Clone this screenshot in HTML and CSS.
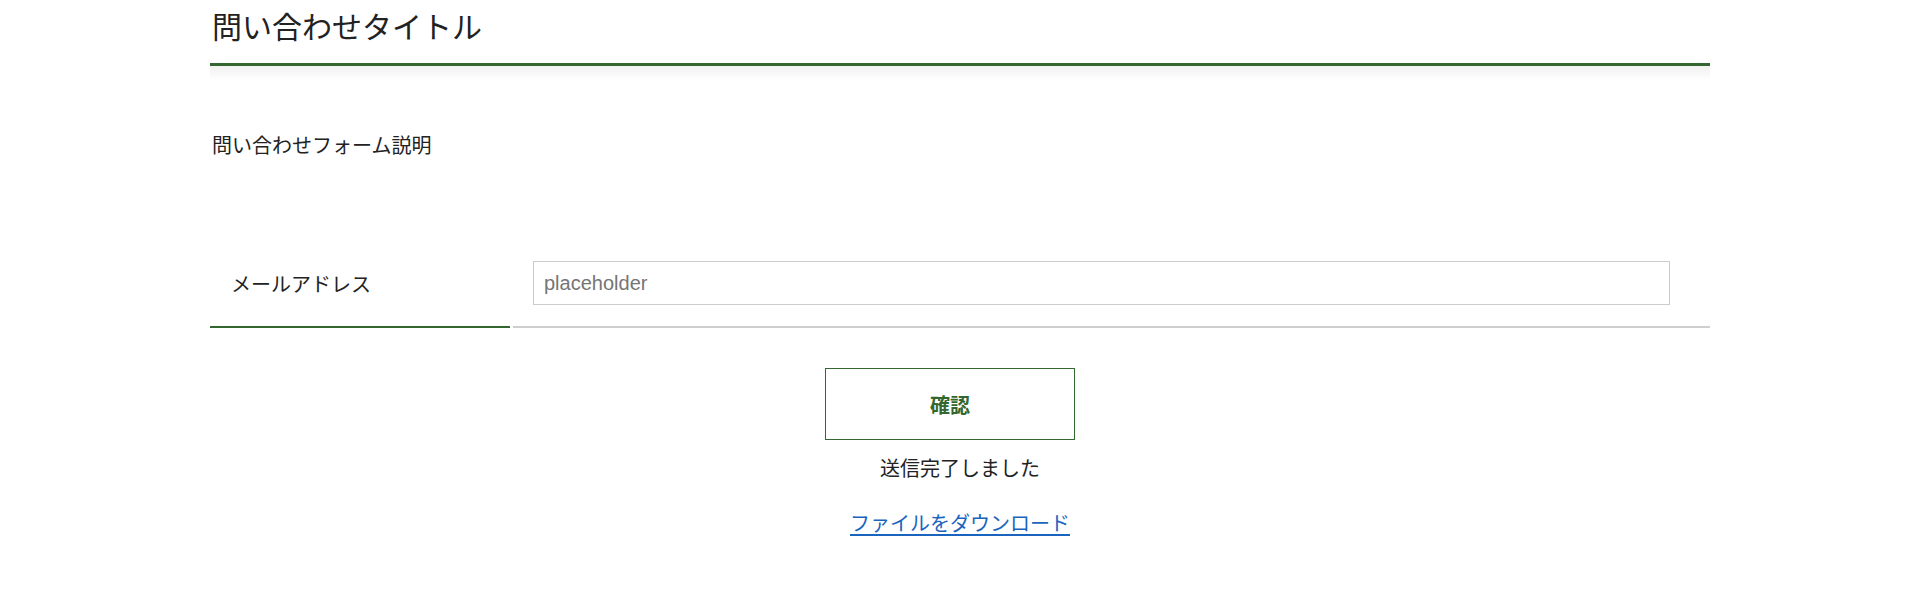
FILE: index.html
```html
<!DOCTYPE html>
<html lang="ja">
<head>
<meta charset="utf-8">
<title>問い合わせ</title>
<link rel="stylesheet" href="styles.css">
</head>
<body>
<main class="container">
  <h1 class="page-title">問い合わせタイトル</h1>
  <p class="description">問い合わせフォーム説明</p>
  <form class="form">
    <div class="form-row">
      <div class="form-label">メールアドレス</div>
      <div class="form-field">
        <input class="text-input" type="text" placeholder="placeholder">
      </div>
    </div>
    <div class="actions">
      <button type="button" class="confirm-btn">確認</button>
    </div>
    <p class="status">送信完了しました</p>
    <p class="download"><a href="#" class="download-link">ファイルをダウンロード</a></p>
  </form>
</main>
</body>
</html>
```

FILE: styles.css
```css
html, body {
  margin: 0;
  padding: 0;
  background: #fff;
}
body {
  font-family: "Noto Sans CJK JP", "Noto Sans", sans-serif;
  color: #222;
}
.container {
  width: 1500px;
  margin: 0 auto;
}
.page-title {
  position: relative;
  margin: 0;
  padding: 3px 2px 15px;
  font-size: 30px;
  line-height: 45px;
  font-weight: 400;
  color: #222;
  border-bottom: 3px solid #33672f;
}
.page-title::after {
  content: "";
  position: absolute;
  left: 0;
  right: 0;
  top: 100%;
  margin-top: 3px;
  height: 14px;
  background: linear-gradient(to bottom, rgba(0,0,0,0.06), rgba(0,0,0,0));
}
.description {
  margin: 64px 0 0;
  padding-left: 2px;
  font-size: 20px;
  line-height: 30px;
}
.form {
  margin-top: 80px;
}
.form-row {
  display: flex;
  align-items: stretch;
}
.form-label {
  width: 300px;
  flex: none;
  display: flex;
  align-items: center;
  padding-left: 21px;
  box-sizing: border-box;
  font-size: 20px;
  border-bottom: 2px solid #33672f;
}
.form-field {
  flex: 1;
  margin-left: 3px;
  padding: 21px 40px 21px 20px;
  border-bottom: 2px solid #cfcfcf;
}
.text-input {
  display: block;
  width: 100%;
  box-sizing: border-box;
  height: 44px;
  border: 1px solid #cccccc;
  padding: 0 10px;
  font-family: "Liberation Sans", Arial, sans-serif;
  font-size: 20px;
  color: #222;
  outline: none;
}
.text-input::placeholder {
  color: #757575;
}
.actions {
  margin-top: 40px;
  text-align: center;
  line-height: 0;
}
.confirm-btn {
  display: inline-block;
  width: 250px;
  height: 72px;
  margin-right: 20px;
  background: #fff;
  border: 1px solid #33672f;
  color: #33672f;
  font-family: "Noto Sans CJK JP", sans-serif;
  font-size: 20px;
  font-weight: 700;
  cursor: pointer;
}
.status {
  margin: 13px 0 0;
  text-align: center;
  font-size: 20px;
  line-height: 30px;
}
.download {
  margin: 25px 0 0;
  text-align: center;
  font-size: 20px;
  line-height: 30px;
}
.download-link {
  color: #1b64be;
  text-decoration: underline;
  text-underline-offset: 3px;
}
```
